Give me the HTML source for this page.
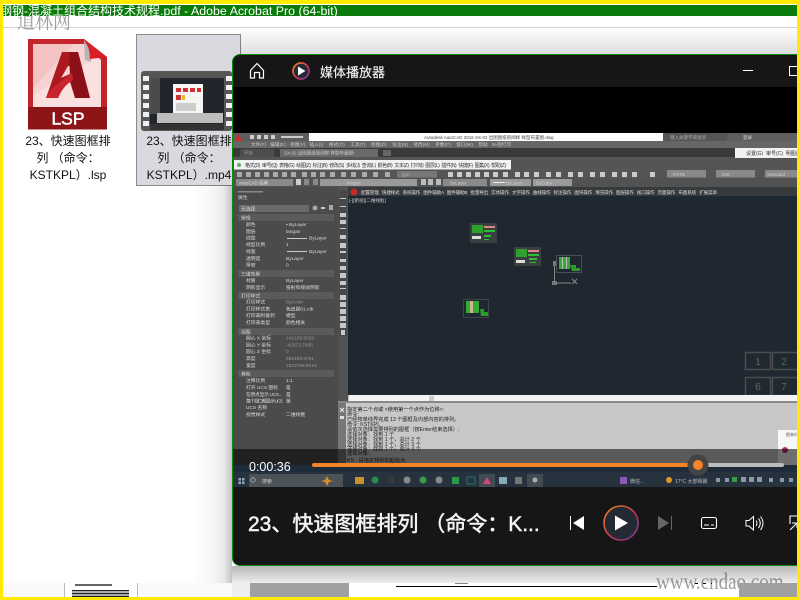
<!DOCTYPE html>
<html><head><meta charset="utf-8"><style>
html,body{margin:0;padding:0;width:800px;height:600px;overflow:hidden;background:#fff}
body{position:relative;font-family:"Liberation Sans","Noto Sans CJK SC",sans-serif}
.a{position:absolute}
.lb{position:absolute;font-size:12px;line-height:17px;text-align:center;color:#111;white-space:nowrap}
svg text{font-family:"Liberation Sans","Noto Sans CJK SC",sans-serif}
</style></head><body>
<div class="a" style="left:0;top:27px;width:800px;height:1px;background:#d4d4d4"></div>
<div class="a" style="left:17px;top:7px;font:18px/22px 'Noto Serif CJK SC',serif;color:#a0a0a0;white-space:nowrap;transform:scaleY(1.2);transform-origin:0 0">道林网</div>
<div class="a" style="left:3px;top:5px;width:794px;height:11px;background:#0a7a0a;overflow:hidden;color:#fff;font-size:12px;line-height:13px;white-space:nowrap"><span style="margin-left:-3px">钢钢-混凝土组合结构技术规程<span style="font-size:12.400px">.pdf - Adobe Acrobat Pro (64-bit)</span></span></div>

<svg class="a" style="left:26px;top:37px" width="84" height="95" viewBox="26 37 84 95">
<path d="M28 39H84L107 57V129.500H28Z" fill="#c4242a"/>
<path d="M33 44H84L101 60V107H33Z" fill="#fbe0e0"/>
<path d="M33 44H74L33 88Z" fill="#f3c2c2"/>
<path d="M33 88L74 44H84L92 60 33 95Z" fill="#f7d2d2"/>
<path d="M28 107H107V129.500H28Z" fill="#8d1518"/>
<path d="M84 40L85 60 91 62 90 50Z" fill="#b5b5b5"/>
<path d="M84 39L107 57 90 59Q90 48 84 39Z" fill="#d81f26"/>
<path fill-rule="evenodd" d="M46 98L62 52H78L90 98H75L70 82Q63 86 58 98ZM61 78L68 66 74 67 72 73Z" fill="#ac1820"/>
<path d="M69 52H78L90 98H75L70 76Z" fill="#8c1017"/>
<path d="M50 90L72 73 73 80Q63 86 58 98H46Z" fill="#c8242d"/>
<text x="68" y="124.500" text-anchor="middle" font-size="17.500" fill="#fff" stroke="#fff" stroke-width=".5">LSP</text>
</svg>
<div class="lb" style="left:8px;top:133px;width:120px">23、快速图框排<br>列 （命令：<br>KSTKPL）.lsp</div>

<div class="a" style="left:136px;top:34px;width:103px;height:150px;background:#d9dae0;border:1px solid #8c8c8c"></div>
<svg class="a" style="left:140px;top:70px" width="92" height="62" viewBox="140 70 92 62">
<rect x="141" y="71" width="91" height="60" rx="3" fill="#565656"/>
<rect x="150" y="73" width="74" height="57" fill="#20262c"/>
<rect x="150" y="73" width="74" height="5" fill="#555"/>
<rect x="150" y="78" width="10" height="36" fill="#4a4a4a"/>
<rect x="173" y="84" width="30" height="30" fill="#f5f5f5"/>
<rect x="176" y="88" width="5" height="4" fill="#c33"/><rect x="183" y="88" width="5" height="4" fill="#c33"/><rect x="190" y="88" width="5" height="4" fill="#c33"/><rect x="197" y="88" width="4" height="4" fill="#c33"/>
<rect x="176" y="95" width="5" height="5" fill="#c33"/><rect x="182" y="95" width="3" height="5" fill="#db3"/>
<rect x="176" y="103" width="20" height="8" fill="#ccc"/>
<rect x="157" y="113" width="66" height="10" fill="#bdbdbd"/>
<rect x="150" y="124" width="74" height="6" fill="#333"/>
<g fill="#f0f0f0"><rect x="143" y="76" width="6" height="5"/><rect x="143" y="85" width="6" height="5"/><rect x="143" y="94" width="6" height="5"/><rect x="143" y="103" width="6" height="5"/><rect x="143" y="112" width="6" height="5"/><rect x="143" y="121" width="6" height="5"/>
<rect x="226" y="76" width="6" height="5"/><rect x="226" y="85" width="6" height="5"/><rect x="226" y="94" width="6" height="5"/><rect x="226" y="103" width="6" height="5"/><rect x="226" y="112" width="6" height="5"/><rect x="226" y="121" width="6" height="5"/></g>
</svg>
<div class="lb" style="left:133px;top:133px;width:112px">23、快速图框排<br>列 （命令：<br>KSTKPL）.mp4</div>

<!-- watermark -->
<div class="a" style="left:656px;top:570px;font:19px/22px 'Liberation Serif',serif;color:#a0a0a0;white-space:nowrap;transform:scaleY(1.2);transform-origin:0 0">www.cndao.com</div>

<!-- bottom strip -->
<div class="a" style="left:3px;top:583px;width:61px;height:14px;background:#fafafa"></div>
<div class="a" style="left:64px;top:583px;width:1px;height:14px;background:#bbb"></div>
<div class="a" style="left:137px;top:583px;width:1px;height:14px;background:#bbb"></div>
<div class="a" style="left:138px;top:583px;width:94px;height:14px;background:#fafafa"></div>
<div class="a" style="left:75px;top:584px;width:37px;height:2px;background:#666"></div>
<div class="a" style="left:72px;top:590px;width:57px;height:7px;background:repeating-linear-gradient(#222 0 1px,#aaa 1px 3px)"></div>
<div class="a" style="left:232px;top:583px;width:18px;height:14px;background:#eee"></div>
<div class="a" style="left:250px;top:583px;width:99px;height:14px;background:#a0a0a0"></div>
<div class="a" style="left:396px;top:586px;width:261px;height:1px;background:#000"></div>
<div class="a" style="left:455px;top:583px;width:13px;height:1px;background:#789"></div>
<div class="a" style="left:695px;top:583px;width:17px;height:1px;background:repeating-linear-gradient(90deg,#000 0 3px,transparent 3px 8px)"></div>
<div class="a" style="left:739px;top:583px;width:58px;height:14px;background:#a0a0a0"></div>

<!-- shadow -->
<div class="a" style="left:240px;top:28px;width:557px;height:26px;background:linear-gradient(to bottom,rgba(0,0,0,0),rgba(0,0,0,.13))"></div>
<div class="a" style="left:192px;top:185px;width:40px;height:398px;background:linear-gradient(to right,rgba(0,0,0,0),rgba(0,0,0,.03) 50%,rgba(0,0,0,.09) 80%,rgba(0,0,0,.24))"></div>
<div class="a" style="left:232px;top:566px;width:565px;height:17px;background:linear-gradient(to bottom,rgba(0,0,0,.28),rgba(0,0,0,.07))"></div>

<!-- window -->
<div class="a" style="left:232px;top:54px;width:565px;height:512px;overflow:hidden;border-radius:8px 0 0 8px;background:#161616;box-sizing:border-box;border:1px solid #0f8a0f;border-right:0">
<svg class="a" style="left:-233px;top:-55px" width="800" height="600" viewBox="0 0 800 600">
<defs><linearGradient id="g" x1="0" y1="0" x2="1" y2="1"><stop offset="0" stop-color="#f08a1c"/><stop offset=".55" stop-color="#c8345a"/><stop offset="1" stop-color="#6a3aa8"/></linearGradient>
<clipPath id="vc"><rect x="233" y="133" width="564" height="354"/></clipPath></defs>
<rect x="233" y="87" width="564" height="46" fill="#000"/>
<!-- header -->
<path d="M250.500 70.500L257 63.500 263.500 70.500V78H259.500V72.500H254.500V78H250.500Z" fill="none" stroke="#fff" stroke-width="1.200"/>
<circle cx="301" cy="71" r="8" fill="#232a33" stroke="url(#g)" stroke-width="1.800"/>
<path d="M298 66.500L305.500 71 298 75.500Z" fill="#fff"/>
<text x="320" y="77" font-size="13" fill="#f2f2f2" stroke="#f2f2f2" stroke-width=".15">媒体播放器</text>
<rect x="743" y="70" width="10" height="1" fill="#fff"/>
<rect x="789.500" y="66.500" width="9" height="9" fill="none" stroke="#fff"/>
<g clip-path="url(#vc)"><g style="filter:blur(.35px)">
<rect x="225" y="125" width="580" height="370" fill="#4f4f4f"/>
<!-- cad top -->
<rect x="309" y="133" width="354" height="8" fill="#fff"/>
<rect x="225" y="133" width="84" height="8" fill="#5e5e5e"/>
<path d="M235 141L238.500 134 242 141Z" fill="#d62a2a"/>
<g fill="#ccc"><rect x="250" y="135" width="4" height="4"/><rect x="257" y="135" width="4" height="4"/><rect x="264" y="135" width="4" height="4"/><rect x="271" y="135" width="4" height="4"/><rect x="281" y="136" width="22" height="2"/></g>
<text x="424" y="139" font-size="4.500" fill="#444">Autodesk AutoCAD 2016    SX-02 出图图纸新闻样 样型布置图.dwg</text>
<rect x="663" y="133" width="64" height="8" fill="#555"/>
<text x="670" y="139" font-size="4.500" fill="#aaa">键入关键字或短语</text>
<rect x="727" y="133" width="78" height="8" fill="#5f5f5f"/>
<text x="743" y="139" font-size="4.500" fill="#ddd">登录</text>
<rect x="225" y="141" width="580" height="7" fill="#666"/>
<text x="251" y="146" font-size="4.500" fill="#ccc" xml:space="preserve" textLength="260">文件(F)   编辑(E)   视图(V)   插入(I)    格式(O)    工具(T)    绘图(D)    标注(N)    修改(M)    参数(P)    窗口(W)    帮助   M-图打印</text>
<rect x="225" y="148" width="510" height="9" fill="#3a3a3a"/>
<rect x="240" y="149" width="34" height="8" fill="#4d4d4d"/>
<text x="244" y="154.500" font-size="4.500" fill="#999">开始</text>
<rect x="280" y="149" width="98" height="8" fill="#6a6a6a"/>
<text x="284" y="154.500" font-size="4.500" fill="#ccc">SX-02 出图图纸新闻样 样型布置图*</text>
<rect x="383" y="150" width="8" height="6" fill="#666"/>
<rect x="225" y="157" width="580" height="13" fill="#555"/>
<rect x="735" y="148" width="70" height="10" fill="#f2f2f2"/>
<text x="746" y="155" font-size="5" fill="#333" xml:space="preserve">设置(G)  审号(C)  明图(K)</text>
<rect x="234" y="160" width="277" height="9.500" fill="#f2f2f2"/>
<text x="245" y="167" font-size="5" fill="#333" xml:space="preserve" textLength="261">格式(D)  审号(Q)  表格(G)  绘图(Z)  标注(B)  修改(S)  多线(J)  查询(L)  颜色(B)  文本(Z)  打印(I)  图层(L)  插件(N)  快捷(F)  图集(X)  帮助(Z)</text>
<circle cx="239" cy="165" r="2" fill="#6a6"/>
<!-- toolbars -->
<rect x="225" y="170" width="580" height="8" fill="#555"/>
<g fill="#aaa"><rect x="237" y="172" width="5" height="5"/><rect x="246" y="172" width="5" height="5"/><rect x="255" y="172" width="5" height="5"/><rect x="264" y="172" width="5" height="5"/><rect x="273" y="172" width="5" height="5"/><rect x="282" y="172" width="5" height="5"/><rect x="291" y="172" width="5" height="5"/><rect x="302" y="172" width="5" height="5"/><rect x="311" y="172" width="5" height="5"/><rect x="320" y="172" width="5" height="5"/><rect x="330" y="172" width="5" height="5"/><rect x="341" y="172" width="5" height="5"/><rect x="351" y="172" width="5" height="5"/><rect x="362" y="172" width="5" height="5"/><rect x="373" y="172" width="5" height="5"/><rect x="385" y="172" width="5" height="5"/></g>
<rect x="397" y="171" width="40" height="6.500" fill="#777"/>
<text x="402" y="176.500" font-size="4.500" fill="#bbb">200</text>
<g fill="#ccc"><rect x="448" y="172" width="5" height="5"/><rect x="457" y="172" width="5" height="5"/><rect x="466" y="172" width="5" height="5"/><rect x="475" y="172" width="5" height="5"/><rect x="484" y="172" width="5" height="5"/><rect x="493" y="172" width="5" height="5"/><rect x="503" y="172" width="5" height="5"/><rect x="515" y="172" width="5" height="5"/><rect x="524" y="172" width="5" height="5"/><rect x="534" y="172" width="5" height="5"/><rect x="546" y="172" width="5" height="5"/><rect x="556" y="172" width="5" height="5"/><rect x="568" y="172" width="5" height="5"/><rect x="578" y="172" width="5" height="5"/><rect x="590" y="172" width="5" height="5"/><rect x="600" y="172" width="5" height="5"/><rect x="612" y="172" width="5" height="5"/><rect x="622" y="172" width="5" height="5"/><rect x="632" y="172" width="5" height="5"/><rect x="650" y="172" width="5" height="5"/></g>
<rect x="667" y="170" width="39" height="7.500" fill="#8a8a8a"/><text x="673" y="176" font-size="4.500" fill="#ccc">PSTB</text>
<rect x="716" y="170" width="39" height="7.500" fill="#8a8a8a"/><text x="722" y="176" font-size="4.500" fill="#ccc">200</text>
<rect x="765" y="170" width="40" height="7.500" fill="#8a8a8a"/><text x="767" y="176" font-size="4.500" fill="#ccc">Standard</text>
<rect x="225" y="178" width="580" height="9" fill="#525252"/>
<rect x="236" y="179" width="57" height="7" fill="#8a8a8a"/><text x="239" y="184.500" font-size="4.500" fill="#ddd">AutoCAD 经典</text>
<rect x="296" y="179" width="5" height="6" fill="#ccc"/><rect x="304" y="179" width="5" height="6" fill="#888"/><rect x="313" y="179" width="5" height="6" fill="#888"/>
<rect x="320" y="179" width="97" height="7" fill="#9a9a9a"/><text x="347" y="184.500" font-size="4.500" fill="#ccc">langan</text>
<rect x="421" y="179" width="5" height="6" fill="#bbb"/><rect x="428" y="179" width="5" height="6" fill="#bbb"/><rect x="436" y="179" width="5" height="6" fill="#bbb"/>
<rect x="443" y="179" width="44" height="7" fill="#8a8a8a"/><text x="450" y="184.500" font-size="4.500" fill="#ccc">ByLayer</text>
<rect x="490" y="179" width="41" height="7" fill="#9a9a9a"/><rect x="493" y="182" width="12" height="1" fill="#eee"/><text x="506" y="184.500" font-size="4.500" fill="#ccc">ByLayer</text>
<rect x="533" y="179" width="39" height="7" fill="#9a9a9a"/><text x="536" y="184.500" font-size="4.500" fill="#ccc">ByColor</text>
<!-- ribbon -->
<rect x="348" y="187" width="457" height="9" fill="#373a3c"/>
<circle cx="354" cy="192" r="3.500" fill="#c22a2a"/>
<text x="361" y="194" font-size="4.600" fill="#ddd" xml:space="preserve" textLength="356">配置管理   快捷样式   系统操作   图件辅助A   图件辅助B   批量导出   实体操作   文字操作   曲线操作   标注操作   图块操作   填充操作   图层操作   视口操作   页面操作   布图系统   扩展菜单</text>
<!-- canvas -->
<rect x="348" y="196" width="457" height="199" fill="#1f2730"/>
<text x="349" y="202" font-size="4.600" fill="#ccc">[-][俯视][二维线框]</text>
<!-- drawings -->
<g><rect x="470" y="223" width="27" height="20" fill="#3a3f42"/><rect x="472" y="225" width="11" height="8" fill="#2ea02e"/><rect x="484" y="226" width="11" height="2" fill="#d88"/><rect x="484" y="230" width="11" height="2" fill="#3b3"/><rect x="472" y="236" width="9" height="3" fill="#ddd"/><rect x="484" y="235" width="7" height="2" fill="#3b3"/><rect x="484" y="239" width="5" height="1" fill="#3b3"/></g>
<g><rect x="514" y="247" width="27" height="19" fill="#3a3f42"/><rect x="516" y="249" width="11" height="8" fill="#2ea02e"/><rect x="528" y="250" width="11" height="2" fill="#d88"/><rect x="528" y="254" width="11" height="2" fill="#3b3"/><rect x="516" y="260" width="9" height="3" fill="#ddd"/><rect x="529" y="258" width="8" height="2" fill="#3b3"/><rect x="530" y="262" width="6" height="1" fill="#3b3"/></g>
<rect x="556" y="255" width="26" height="18" fill="#4a4f52"/><rect x="557" y="256" width="24" height="16" fill="#1f2730"/>
<rect x="559" y="257" width="11" height="12" fill="#38a838"/><rect x="562" y="257" width="1" height="12" fill="#bbb"/><rect x="566" y="257" width="1" height="12" fill="#bbb"/>
<path d="M570 265H576V268H580V271H572Z" fill="#2c9c2c"/>
<g stroke="#8a8a8a" fill="none"><path d="M554.500 266V283H571"/><path d="M572 279L577 284M577 279L572 284"/></g><rect x="552" y="281" width="5" height="4" fill="#777"/><rect x="553" y="261" width="3" height="5" fill="#777"/>
<rect x="463" y="299" width="26" height="19" fill="#3f4447"/><rect x="464" y="300" width="24" height="17" fill="#1f2730"/>
<rect x="466" y="301" width="13" height="12" fill="#38a838"/><rect x="470" y="301" width="3" height="12" fill="#c9b98a"/>
<path d="M480 309H484V312H488V316H481Z" fill="#2c9c2c"/>
<g fill="#22282f" stroke="#4a4d50" stroke-width="1.500"><rect x="745.500" y="352.500" width="25" height="17"/><rect x="772.500" y="352.500" width="30" height="17"/><rect x="745.500" y="377.500" width="25" height="18"/><rect x="772.500" y="377.500" width="30" height="18"/></g>
<g font-size="10" text-anchor="middle"><text x="758" y="365" fill="#666">1</text><text x="784" y="365" fill="#3f7a3f">2</text><text x="758" y="390" fill="#666">6</text><text x="784" y="390" fill="#3f7a3f">7</text></g>
<!-- tool strip -->
<rect x="338" y="187" width="10" height="278" fill="#535353"/>
<rect x="339" y="190" width="8" height="146" fill="#484848"/>
<g fill="#c8c8c8"><rect x="340" y="198" width="6" height="1"/><rect x="340" y="206" width="6" height="1"/><rect x="340" y="213" width="6" height="4"/><rect x="340" y="220" width="6" height="4"/><rect x="340" y="228" width="6" height="1"/><rect x="340" y="235" width="6" height="4"/><rect x="340" y="243" width="6" height="5"/><rect x="340" y="251" width="6" height="2"/><rect x="340" y="259" width="6" height="3"/><rect x="340" y="266" width="6" height="4"/><rect x="340" y="273" width="6" height="5"/><rect x="340" y="281" width="6" height="4"/><rect x="340" y="288" width="6" height="1"/><rect x="340" y="295" width="6" height="5"/><rect x="340" y="302" width="6" height="5"/><rect x="340" y="309" width="6" height="5"/><rect x="340" y="316" width="6" height="5"/><rect x="340" y="323" width="6" height="5"/><rect x="341" y="330" width="4" height="5"/></g>
<!-- props -->
<rect x="225" y="187" width="113" height="278" fill="#4b4b4b"/>
<text x="238" y="199" font-size="4.800" fill="#ccc">属性</text>
<rect x="238" y="191" width="25" height="1.500" fill="#888"/>
<rect x="239" y="205" width="70" height="7" fill="#6a6a6a"/><text x="241" y="210.500" font-size="4.800" fill="#ddd">无选择</text>
<circle cx="315" cy="208" r="2.500" fill="#9ab"/><rect x="321" y="207" width="4" height="2" fill="#ccc"/><rect x="329" y="205" width="4" height="5" fill="#aaa"/>
<g fill="#5b5b5b"><rect x="238" y="214" width="96" height="7"/><rect x="238" y="270" width="96" height="7"/><rect x="238" y="292" width="96" height="7"/><rect x="238" y="328" width="96" height="7"/><rect x="238" y="370" width="96" height="7"/></g>
<g font-size="4.800" fill="#dadada"><text x="241" y="219.500">常规</text><text x="241" y="275.500">三维效果</text><text x="241" y="297.500">打印样式</text><text x="241" y="333.500">视图</text><text x="241" y="375.500">其他</text>
<text x="246" y="226">颜色</text><text x="286" y="226">▪ ByLayer</text>
<text x="246" y="233">图层</text><text x="286" y="233">langan</text>
<text x="246" y="239.500">线型</text><text x="309" y="239.500">ByLayer</text>
<text x="246" y="246">线型比例</text><text x="286" y="246">1</text>
<text x="246" y="253">线宽</text><text x="309" y="253">ByLayer</text>
<text x="246" y="260">透明度</text><text x="286" y="260">ByLayer</text>
<text x="246" y="266.500">厚度</text><text x="286" y="266.500">0</text>
<text x="246" y="282">材质</text><text x="286" y="282">ByLayer</text>
<text x="246" y="289">阴影显示</text><text x="286" y="289">投射和接收阴影</text>
<text x="246" y="303.500">打印样式</text><text x="286" y="303.500" fill="#999">ByColor</text>
<text x="246" y="310.500">打印样式表</text><text x="286" y="310.500">色追踪01.ctb</text>
<text x="246" y="317">打印表附着到</text><text x="286" y="317">模型</text>
<text x="246" y="324">打印表类型</text><text x="286" y="324">颜色相关</text>
<text x="246" y="339.500">圆心 X 坐标</text><text x="286" y="339.500" fill="#999">142109.5026</text>
<text x="246" y="346.500">圆心 Y 坐标</text><text x="286" y="346.500" fill="#999">-42373.7665</text>
<text x="246" y="353">圆心 Z 坐标</text><text x="286" y="353" fill="#999">0</text>
<text x="246" y="360">高度</text><text x="286" y="360" fill="#999">665199.8791</text>
<text x="246" y="367">宽度</text><text x="286" y="367" fill="#999">1523756.8219</text>
<text x="246" y="382">注释比例</text><text x="286" y="382">1:1</text>
<text x="246" y="389">打开 UCS 图标</text><text x="286" y="389">是</text>
<text x="246" y="396" textLength="36">在原点显示 UCS...</text><text x="286" y="396">是</text>
<text x="246" y="402.500" textLength="37">每个视口都显示 UCS</text><text x="286" y="402.500">是</text>
<text x="246" y="409">UCS 名称</text>
<text x="246" y="416">视觉样式</text><text x="286" y="416">二维线框</text></g>
<rect x="287" y="238" width="20" height="1" fill="#ccc"/><rect x="287" y="251" width="20" height="1" fill="#ccc"/>
<!-- scroll + command -->
<rect x="348" y="395" width="457" height="6" fill="#f4f4f4"/>
<rect x="348" y="395" width="1" height="6" fill="#bbb"/><rect x="429" y="396" width="5" height="5" fill="#ccc"/>
<rect x="338" y="401" width="467" height="2" fill="#888"/>
<rect x="338" y="403" width="467" height="62" fill="#c8c8c8"/>
<rect x="338" y="403" width="8" height="62" fill="#777"/>
<path d="M340 408L344 412M344 408L340 412" stroke="#eee"/><rect x="340" y="416" width="4" height="3" fill="#ddd"/>
<g font-size="5.200" fill="#222"><text x="347" y="411">指定第二个点或 &lt;使用第一个点作为位移&gt;:</text><text x="347" y="416">命令:</text><text x="347" y="421">已经按单线界完成 13 个图框及内部内容的排列。</text><text x="347" y="426">命令:  KSTKPL</text><text x="347" y="431">请依次选择需要排列的图框（按Enter结束选择）:</text><text x="347" y="436">选择对象：找到 1 个</text><text x="347" y="441">选择对象：找到 1 个，总计 2 个</text><text x="347" y="446">选择对象：找到 1 个，总计 3 个</text><text x="347" y="450.500">选择对象：找到 1 个，总计 4 个</text><text x="347" y="455">选择对象：</text><text x="347" y="462">KS - 请指定排列的起始点:</text></g>
<rect x="778" y="430" width="25" height="35" fill="#f7f7f7"/>
<circle cx="785" cy="450" r="3" fill="#b5316a"/>
<text x="786" y="436" font-size="4" fill="#555">图来吗</text>
<!-- overlay -->
<rect x="225" y="449" width="580" height="16" fill="#000" opacity=".55"/>
<!-- taskbar -->
<rect x="225" y="465" width="580" height="22" fill="#1e2b38"/>
<rect x="225" y="472" width="580" height="15" fill="#26333f"/>
<g fill="#9ab"><rect x="238.500" y="478" width="2.500" height="2.500"/><rect x="242" y="478" width="2.500" height="2.500"/><rect x="238.500" y="481.500" width="2.500" height="2.500"/><rect x="242" y="481.500" width="2.500" height="2.500"/></g>
<rect x="249" y="474" width="94" height="13" fill="#4b5359"/>
<text x="262" y="483" font-size="5" fill="#ccc">搜索</text>
<circle cx="253" cy="480" r="2.200" fill="none" stroke="#ccc" stroke-width=".7"/>
<path d="M327 476L329 480 333 481 329 482 327 486 325 482 321 481 325 480Z" fill="#d98d2a"/>
<rect x="355" y="477" width="9" height="7" fill="#c9912e"/>
<circle cx="375" cy="480" r="3.500" fill="#2c8a4a"/><circle cx="391" cy="480" r="3.500" fill="#3a3a3a"/><circle cx="407" cy="480" r="3.500" fill="#888"/><circle cx="423" cy="480" r="3.500" fill="#3a9a4a"/><circle cx="439" cy="480" r="3.500" fill="#888"/>
<rect x="452" y="477" width="7" height="7" fill="#2a9a4a"/><rect x="467" y="477" width="8" height="7" fill="#234" stroke="#3a9a6a" stroke-width=".6"/>
<rect x="479" y="474" width="16" height="13" fill="#414b54"/><path d="M483 484L487 477 491 484Z" fill="#d6457a"/>
<rect x="499" y="477" width="8" height="7" fill="#8ab"/><rect x="515" y="477" width="7" height="7" fill="#777"/>
<rect x="527" y="474" width="16" height="13" fill="#414b54"/><circle cx="535" cy="480" r="2.500" fill="#aaa"/>
<rect x="620" y="477" width="7" height="7" fill="#8b5ab8"/><text x="630" y="483" font-size="5" fill="#bbb">微信…</text>
<circle cx="669" cy="480" r="3" fill="#d99a2a"/><text x="675" y="483" font-size="5" fill="#bbb">17°C  大部晴朗</text>
<g fill="#8a99a6"><rect x="716" y="478" width="4" height="4"/><rect x="725" y="478" width="4" height="4"/><rect x="732" y="477" width="5" height="5" fill="#3a9a4a"/><rect x="741" y="477" width="5" height="5"/><rect x="749" y="477" width="5" height="5"/><rect x="757" y="477" width="5" height="5"/><rect x="769" y="478" width="4" height="4"/><rect x="780" y="478" width="4" height="4"/><rect x="789" y="478" width="4" height="4"/></g>
</g></g>
<!-- overlay controls -->
<text x="249" y="471" font-size="12.500" fill="#fff">0:00:36</text>
<rect x="312" y="463" width="386" height="4" rx="2" fill="#f4832a"/>
<rect x="698" y="463" width="86" height="4" rx="2" fill="#bdbdbd"/>
<circle cx="698" cy="465" r="10.500" fill="#444"/>
<circle cx="698" cy="465" r="5" fill="#f4832a"/>
<!-- control bar -->
<rect x="233" y="487" width="564" height="78" fill="#161616"/>
<text x="248" y="531" font-size="21" fill="#f5f5f5" stroke="#f5f5f5" stroke-width=".5" xml:space="preserve">23、快速图框排列 （命令：K...</text>
<rect x="570" y="516" width="1" height="14" fill="#fff"/>
<path d="M584 516V530L573 523Z" fill="#fff"/>
<circle cx="621" cy="523" r="17" fill="#232a33" stroke="url(#g)" stroke-width="1.600"/>
<path d="M615 515.500L628 523 615 530.500Z" fill="#fff"/>
<path d="M658 516V530L669 523Z" fill="#666"/><rect x="671" y="516" width="1" height="14" fill="#666"/>
<rect x="701.500" y="517.500" width="15" height="11" rx="2" fill="none" stroke="#fff" stroke-width="1.100"/>
<path d="M704 525H709M711 525H714" stroke="#fff"/>
<path d="M746 520.500H749L753.500 516.500V530L749 526H746Z" fill="none" stroke="#fff" stroke-width="1"/>
<path d="M756 520.500Q758 523 756 526M758.500 518.500Q762 523 758.500 528M760.500 516.500Q765.500 523 760.500 530" fill="none" stroke="#fff"/>
<path d="M790 524V516H799V524" fill="none" stroke="#fff" stroke-width="1.100"/>
<path d="M790 530L797 523M792 523H797V528" fill="none" stroke="#fff" stroke-width="1.100"/>
</svg>
</div>

<!-- yellow frame -->
<div class="a" style="left:0;top:0;width:800px;height:4px;background:#ffea00"></div>
<div class="a" style="left:0;top:0;width:3px;height:600px;background:#ffea00"></div>
<div class="a" style="left:797px;top:0;width:3px;height:600px;background:#ffea00"></div>
<div class="a" style="left:0;top:597px;width:800px;height:3px;background:#ffea00"></div>
</body></html>
